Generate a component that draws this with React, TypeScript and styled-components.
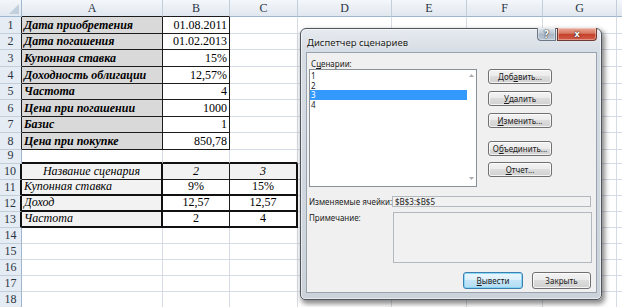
import React from "react";
import styled, { createGlobalStyle } from "styled-components";

const Global = createGlobalStyle`
  html, body { margin: 0; padding: 0; background: #fff; overflow: hidden; }
  #root { width: 622px; height: 307px; }
`;

type Edge = "grid" | "thin" | "thick";
const edge = (e?: Edge) =>
  e === "thin" ? "1px solid #1c1c1c" : e === "thick" ? "2px solid #111" : "1px solid #d6dce6";

const Page = styled.div`
  position: relative;
  width: 622px;
  height: 307px;
  overflow: hidden;
  font-family: "Liberation Serif", "Times New Roman", serif;
  color: #000;
`;

const Sheet = styled.div`
  display: grid;
  grid-template-columns: 22px 141px 67px 68px 94px 75px 76px 74px 30px;
  grid-template-rows: 17px repeat(8, 16.625px) 14px repeat(9, 16px);
`;

const Corner = styled.div`
  position: relative;
  box-sizing: border-box;
  background: linear-gradient(#f3f6fa, #e2e8f0);
  border-right: 1px solid #9eb6ce;
  border-bottom: 1px solid #9eb6ce;
  &::after {
    content: "";
    position: absolute;
    right: 2px;
    bottom: 2px;
    border-left: 10px solid transparent;
    border-bottom: 10px solid #c2cfdd;
  }
`;

const ColHead = styled.div<{ $dark?: boolean }>`
  box-sizing: border-box;
  display: flex;
  align-items: center;
  justify-content: center;
  background: linear-gradient(#f4f7fb, #e1e7ef);
  border-right: 1px solid #c3cedb;
  border-bottom: 1px solid ${(p) => (p.$dark ? "#1c1c1c" : "#9eb6ce")};
  font-size: 12px;
  color: #2a3442;
`;

const RowHead = styled.div<{ $edge?: Edge }>`
  box-sizing: border-box;
  display: flex;
  align-items: flex-end;
  justify-content: center;
  padding-bottom: 1px;
  background: #e6ecf4;
  border-right: ${(p) => (p.$edge ? edge(p.$edge) : "1px solid #9eb6ce")};
  border-bottom: 1px solid #c3cedb;
  font-size: 12px;
  line-height: 13px;
  color: #2a3442;
`;

const Cell = styled.div<{
  $bg?: string;
  $b?: boolean;
  $i?: boolean;
  $al?: "l" | "c" | "r";
  $r?: Edge;
  $bb?: Edge;
}>`
  box-sizing: border-box;
  display: flex;
  align-items: flex-end;
  justify-content: ${(p) => (p.$al === "r" ? "flex-end" : p.$al === "c" ? "center" : "flex-start")};
  padding: 0 2px 1px 2px;
  overflow: hidden;
  white-space: nowrap;
  font-size: 12px;
  line-height: 13px;
  background: ${(p) => p.$bg || "#fff"};
  font-weight: ${(p) => (p.$b ? 700 : 400)};
  font-style: ${(p) => (p.$i ? "italic" : "normal")};
  border-right: ${(p) => edge(p.$r)};
  border-bottom: ${(p) => edge(p.$bb)};
`;

interface Spec {
  v?: string;
  bg?: string;
  b?: boolean;
  i?: boolean;
  al?: "l" | "c" | "r";
  r?: Edge;
  bb?: Edge;
}
interface RowSpec {
  n: number;
  head?: Edge;
  cells: Spec[];
}

const labels = [
  "Дата приобретения",
  "Дата погашения",
  "Купонная ставка",
  "Доходность облигации",
  "Частота",
  "Цена при погашении",
  "Базис",
  "Цена при покупке",
];
const values = ["01.08.2011", "01.02.2013", "15%", "12,57%", "4", "1000", "1", "850,78"];
const table = [
  ["Название сценария", "2", "3"],
  ["Купонная ставка", "9%", "15%"],
  ["Доход", "12,57", "12,57"],
  ["Частота", "2", "4"],
];

const buildRows = (): RowSpec[] => {
  const rows: RowSpec[] = [];
  for (let n = 1; n <= 18; n++) {
    const cells: Spec[] = Array.from({ length: 8 }, () => ({}));
    const row: RowSpec = { n, cells };
    if (n <= 8) {
      row.head = "thin";
      cells[0] = { v: labels[n - 1], bg: "#d9d9d9", b: true, i: true, r: "thin", bb: "thin" };
      cells[1] = { v: values[n - 1], al: "r", r: "thin", bb: "thin" };
    }
    if (n === 9) {
      cells[0] = { bb: "thick" };
      cells[1] = { bb: "thick" };
      cells[2] = { bb: "thick" };
    }
    if (n >= 10 && n <= 13) {
      const t = table[n - 10];
      const first = n === 10;
      const bb: Edge = first ? "thin" : "thick";
      row.head = "thick";
      cells[0] = { v: t[0], bg: "#f2f2f2", i: true, al: first ? "c" : "l", r: "thick", bb };
      cells[1] = { v: t[1], bg: first ? "#f2f2f2" : undefined, i: first, al: "c", r: "thin", bb };
      cells[2] = { v: t[2], bg: first ? "#f2f2f2" : undefined, i: first, al: "c", r: "thick", bb };
    }
    rows.push(row);
  }
  return rows;
};

const cols = ["A", "B", "C", "D", "E", "F", "G", ""];

/* ---------------- Dialog ---------------- */

const Dialog = styled.div`
  position: absolute;
  left: 300px;
  top: 28px;
  width: 302px;
  height: 272px;
  box-sizing: border-box;
  display: flex;
  flex-direction: column;
  padding: 0 4px 6px 5px;
  border: 1px solid #4f5660;
  border-radius: 6px 6px 5px 5px;
  background: linear-gradient(#e7ebf0 0px, #d7dde4 22px, #cbd2da 100%);
  box-shadow: 2px 3px 5px 1px rgba(0, 0, 0, 0.45), inset 0 0 0 1px rgba(255, 255, 255, 0.55);
  font-family: "Noto Sans", "Segoe UI", sans-serif;
  color: #1b1b1b;
`;

const TitleBar = styled.div`
  height: 23px;
  display: flex;
  align-items: flex-start;
`;

const TitleText = styled.div`
  font-size: 9.5px;
  line-height: 12px;
  padding-top: 8px;
  padding-left: 1px;
  text-shadow: 0 0 3px #fff;
`;

const TitleButtons = styled.div`
  margin-left: auto;
  margin-top: -1px;
  display: flex;
  gap: 1px;
`;

const CaptionBtn = styled.div<{ $close?: boolean }>`
  box-sizing: border-box;
  height: 13px;
  width: ${(p) => (p.$close ? 40 : 19)}px;
  display: flex;
  align-items: center;
  justify-content: center;
  border: 1px solid ${(p) => (p.$close ? "#6e3a32" : "#6d7886")};
  border-top: none;
  border-radius: ${(p) => (p.$close ? "0 0 4px 0" : "0 0 0 4px")};
  background: ${(p) =>
    p.$close
      ? "linear-gradient(#eaa996, #d8775f 45%, #c4402a 50%, #d35c46)"
      : "linear-gradient(#dfe6ee, #bcc7d3 45%, #a9b6c5 50%, #bcc8d6)"};
  box-shadow: inset 0 0 0 1px rgba(255, 255, 255, 0.35);
  color: #fff;
  font-weight: 700;
  font-size: ${(p) => (p.$close ? 9 : 10)}px;
  line-height: 10px;
  text-shadow: 0 0 2px #333, 0 0 1px #222;
`;

const Body = styled.div`
  flex: 1;
  box-sizing: border-box;
  display: flex;
  flex-direction: column;
  padding: 6px 5px 0 2px;
  background: #f0f0f0;
  border: 1px solid #98a3af;
  font-size: 8px;
  line-height: 10px;
`;

const GroupLabel = styled.div`
  height: 10px;
  margin-left: 2px;
`;

const TopRow = styled.div`
  display: flex;
  gap: 11px;
`;

const ListBox = styled.div`
  box-sizing: border-box;
  width: 168px;
  height: 118px;
  display: flex;
  background: #fff;
  border: 1px solid #8a9098;
`;

const Items = styled.div`
  flex: 1;
  padding-top: 1px;
`;

const Item = styled.div<{ $sel?: boolean }>`
  height: 9.5px;
  line-height: 9.5px;
  padding-left: 1px;
  background: ${(p) => (p.$sel ? "#3399ff" : "transparent")};
  color: ${(p) => (p.$sel ? "#fff" : "#1b1b1b")};
`;

const ScrollBar = styled.div`
  width: 9px;
  display: flex;
  flex-direction: column;
  justify-content: space-between;
  align-items: center;
  padding: 4px 0 6px;
`;

const ButtonCol = styled.div`
  display: flex;
  flex-direction: column;
`;

const Btn = styled.div<{ $w?: number; $h?: number; $gap?: number; $def?: boolean }>`
  box-sizing: border-box;
  width: ${(p) => p.$w ?? 64}px;
  height: ${(p) => p.$h ?? 15}px;
  margin-top: ${(p) => p.$gap ?? 0}px;
  display: flex;
  align-items: center;
  justify-content: center;
  border: 1px solid ${(p) => (p.$def ? "#3c7fb1" : "#707070")};
  border-radius: 3px;
  background: ${(p) =>
    p.$def
      ? "linear-gradient(#ebf6fc, #dcf0fb 50%, #c4e5f7 50%, #b4dcf2)"
      : "linear-gradient(#f3f3f3, #ebebeb 50%, #dddddd 50%, #d0d0d0)"};
  box-shadow: inset 0 0 0 1px ${(p) => (p.$def ? "rgba(120,210,245,.8)" : "rgba(255,255,255,.75)")};
  font-size: 8px;
  line-height: 10px;
  color: #1b1b1b;
  white-space: nowrap;
`;

const FieldRow = styled.div<{ $gap: number; $label: number }>`
  display: grid;
  grid-template-columns: ${(p) => p.$label}px 199px;
  margin-top: ${(p) => p.$gap}px;
  align-items: start;
`;

const FieldLabel = styled.div`
  line-height: 11px;
  white-space: nowrap;
`;

const Field = styled.div<{ $h: number }>`
  box-sizing: border-box;
  height: ${(p) => p.$h}px;
  padding-left: 2px;
  line-height: 9px;
  background: #f1f1f1;
  border: 1px solid #b3b8bf;
`;

const BottomRow = styled.div`
  display: flex;
  justify-content: flex-end;
  gap: 9px;
  margin-top: 9px;
`;

const Caret = ({ up }: { up?: boolean }) => (
  <svg width="5" height="3" viewBox="0 0 5 3">
    <path d={up ? "M0 3 L2.5 0 L5 3 Z" : "M0 0 L2.5 3 L5 0 Z"} fill="#a8adb3" />
  </svg>
);

export default function App() {
  const rows = buildRows();
  return (
    <Page>
      <Global />
      <Sheet>
        <Corner />
        {cols.map((c, i) => (
          <ColHead key={"h" + i} $dark={i < 2}>
            {c}
          </ColHead>
        ))}
        {rows.map((r) => (
          <React.Fragment key={r.n}>
            <RowHead $edge={r.head}>{r.n}</RowHead>
            {r.cells.map((c, j) => (
              <Cell key={j} $bg={c.bg} $b={c.b} $i={c.i} $al={c.al} $r={c.r} $bb={c.bb}>
                {c.v}
              </Cell>
            ))}
          </React.Fragment>
        ))}
      </Sheet>

      <Dialog>
        <TitleBar>
          <TitleText>Диспетчер сценариев</TitleText>
          <TitleButtons>
            <CaptionBtn>?</CaptionBtn>
            <CaptionBtn $close>x</CaptionBtn>
          </TitleButtons>
        </TitleBar>
        <Body>
          <GroupLabel>
            С<u>ц</u>енарии:
          </GroupLabel>
          <TopRow>
            <ListBox>
              <Items>
                <Item>1</Item>
                <Item>2</Item>
                <Item $sel>3</Item>
                <Item>4</Item>
              </Items>
              <ScrollBar>
                <Caret up />
                <Caret />
              </ScrollBar>
            </ListBox>
            <ButtonCol>
              <Btn>
                Доб<u>а</u>вить...
              </Btn>
              <Btn $gap={7}>
                <u>У</u>далить
              </Btn>
              <Btn $gap={7}>
                <u>И</u>зменить...
              </Btn>
              <Btn $gap={13}>
                О<u>б</u>ъединить...
              </Btn>
              <Btn $gap={6}>
                <u>О</u>тчет...
              </Btn>
            </ButtonCol>
          </TopRow>
          <FieldRow $gap={9} $label={83}>
            <FieldLabel>Изменяемые ячейки:</FieldLabel>
            <Field $h={11}>$B$3:$B$5</Field>
          </FieldRow>
          <FieldRow $gap={5} $label={84}>
            <FieldLabel>Примечание:</FieldLabel>
            <Field $h={51} />
          </FieldRow>
          <BottomRow>
            <Btn $w={60} $h={17} $def>
              <u>В</u>ывести
            </Btn>
            <Btn $w={59} $h={17}>
              Закрыть
            </Btn>
          </BottomRow>
        </Body>
      </Dialog>
    </Page>
  );
}
